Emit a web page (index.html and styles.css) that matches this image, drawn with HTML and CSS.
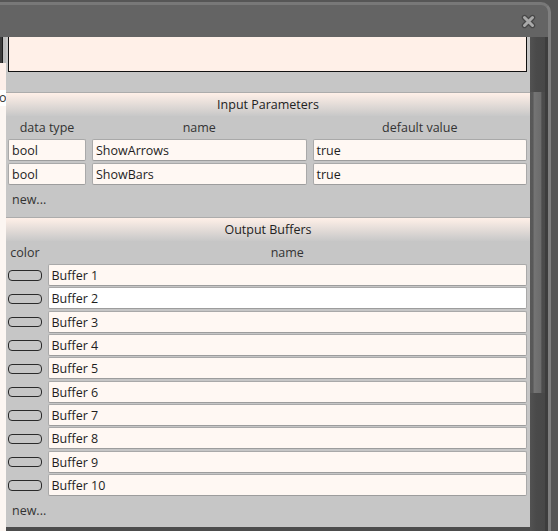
FILE: index.html
```html
<!DOCTYPE html>
<html lang="en">
<head>
<meta charset="UTF-8" />
<meta name="viewport" content="width=device-width, initial-scale=1" />
<title>Indicator Settings</title>
<link rel="stylesheet" href="styles.css">
</head>
<body>

<div class="window">
  <div class="frame">

    <!-- Title bar -->
    <div class="titlebar">
      <svg class="close" width="15" height="15" viewBox="0 0 15 15">
        <path d="M3.5 3.5 L11.5 11.5 M11.5 3.5 L3.5 11.5" stroke="#474747" stroke-width="5.4" stroke-linecap="round" fill="none"/>
        <path d="M3.5 3.5 L11.5 11.5 M11.5 3.5 L3.5 11.5" stroke="#a9a9a9" stroke-width="3" stroke-linecap="round" fill="none"/>
      </svg>
    </div>

    <div class="main">
      <!-- what shows of the page behind -->
      <div class="behind">
        <div class="behind-dark"></div>
        <div class="behind-cream"></div>
        <div class="behind-label">o</div>
        <div class="behind-rest"></div>
      </div>

      <div class="content">
        <div class="panel">
          <div class="code-box"></div>

          <!-- Input parameters -->
          <div class="section">
            <div class="section-title">Input Parameters</div>
            <div class="params-grid params-head">
              <span>data type</span>
              <span>name</span>
              <span>default value</span>
            </div>
            <div class="params-list">
              <div class="params-grid">
                <div class="field">bool</div>
                <div class="field">ShowArrows</div>
                <div class="field">true</div>
              </div>
              <div class="params-grid">
                <div class="field">bool</div>
                <div class="field">ShowBars</div>
                <div class="field">true</div>
              </div>
            </div>
            <div class="new-link">new...</div>
          </div>

          <!-- Output buffers -->
          <div class="section">
            <div class="section-title">Output Buffers</div>
            <div class="buffer-grid params-head">
              <span>color</span>
              <span>name</span>
            </div>
            <div class="buffer-list" id="bufferList"></div>
            <div class="new-link">new...</div>
          </div>
        </div>
        <div class="bottom-edge"></div>
      </div>

      <div class="scrollbar"><div class="thumb"></div></div>
      <div class="inner-edge"></div>
    </div>

  </div>
</div>

<script>
  const list = document.getElementById('bufferList');
  for (let i = 1; i <= 10; i++) {
    const row = document.createElement('div');
    row.className = 'buffer-grid';
    row.innerHTML = '<div class="swatch"></div><div class="field' + (i === 2 ? ' hover' : '') + '">Buffer ' + i + '</div>';
    list.appendChild(row);
  }
</script>

</body>
</html>
```

FILE: styles.css
```css
html, body {
  margin: 0;
  padding: 0;
  height: 100%;
  font-family: 'Open Sans', 'Noto Sans', sans-serif;
  font-size: 12.5px;
  background: #555;
}
.window {
  width: 558px;
  height: 531px;
  box-sizing: border-box;
  padding: 2px 7px 0 0;
  background: #565656;
  overflow: hidden;
}
.frame {
  height: 100%;
  box-sizing: border-box;
  border-top: 3px solid #787878;
  border-right: 3px solid #7f7f7f;
  border-top-right-radius: 10px;
  background: #646464;
  display: flex;
  flex-direction: column;
}
.titlebar {
  height: 32px;
  display: flex;
  align-items: center;
  justify-content: flex-end;
  padding-right: 12px;
}
.close {
  display: block;
  margin-top: 1px;
}
.main {
  flex: 1;
  display: flex;
  min-height: 0;
}

/* page behind the dialog */
.behind {
  width: 6px;
  display: flex;
  flex-direction: column;
  overflow: hidden;
}
.behind-dark {
  height: 26px;
  background: linear-gradient(to right, #3c3c3c 0 2px, #1c1c1c 2px 3px, #bcbcbc 3px);
}
.behind-cream {
  height: 27px;
  background: #fdefe9;
}
.behind-label {
  height: 16px;
  line-height: 16px;
  background: #fff;
  color: #333;
  margin-left: -1px;
}
.behind-rest {
  flex: 1;
  background: #fcf6f2;
}

.content {
  width: 524px;
  display: flex;
  flex-direction: column;
}
.panel {
  flex: 1;
  min-height: 0;
  overflow: hidden;
  background: #c6c6c6;
  padding: 0 3px 0 2px;
}
.bottom-edge {
  height: 4px;
  background: #4c4c4c;
}
.code-box {
  height: 35px;
  box-sizing: border-box;
  border: 1px solid #111;
  border-top: none;
  background: #fff0e8;
}
.section {
  margin-top: 20px;
}
.section + .section {
  margin-top: 0;
}
.section-title {
  height: 24px;
  box-sizing: border-box;
  margin: 0 -3px 0 -2px;
  border-top: 1px solid #acacac;
  background: linear-gradient(#fff0e8, #c8c8c8);
  display: flex;
  align-items: center;
  justify-content: center;
  color: #222;
}
.params-grid {
  display: grid;
  grid-template-columns: 78px 1fr 1fr;
  gap: 6px;
}
.buffer-grid {
  display: grid;
  grid-template-columns: 34px 1fr;
  gap: 5.5px;
  align-items: center;
}
.params-head {
  height: 23px;
  align-items: center;
  color: #333;
  text-align: center;
}
.params-list {
  display: flex;
  flex-direction: column;
  gap: 2px;
}
.buffer-list {
  display: flex;
  flex-direction: column;
  gap: 1.33px;
}
.field {
  height: 22px;
  box-sizing: border-box;
  border: 1px solid #a9a9a9;
  border-bottom-color: #9d9d9d;
  border-radius: 2px;
  background: #fff8f3;
  padding: 0 3px;
  line-height: 21px;
  color: #1e1e1e;
  white-space: nowrap;
  overflow: hidden;
}
.field.hover {
  background: #fff;
}
.swatch {
  height: 10.5px;
  box-sizing: border-box;
  margin-top: 1px;
  border: 1.5px solid #2a2a2a;
  border-radius: 4px;
}
.new-link {
  height: 32px;
  box-sizing: border-box;
  padding: 6px 0 0 4px;
  line-height: 18px;
  color: #333;
}

/* scrollbar and frame edge */
.scrollbar {
  width: 15px;
  background: linear-gradient(to right, #525252, #4a4a4a 40%, #474747);
}
.thumb {
  margin-top: 55px;
  height: 301px;
  background: linear-gradient(to right, #585858 0, #595959 18%, #747474 30%, #6c6c6c 70%, #4c4c4c 80%, #4a4a4a 100%);
}
.inner-edge {
  width: 3px;
  background: #3d3d3d;
}
```
